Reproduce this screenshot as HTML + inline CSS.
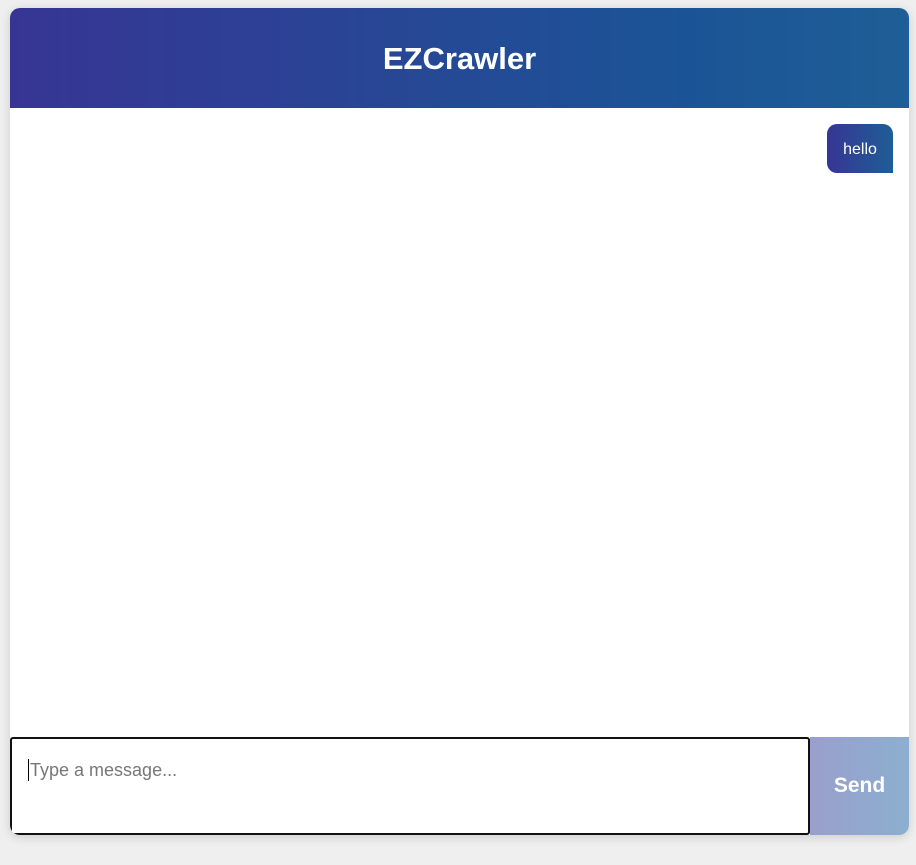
<!DOCTYPE html>
<html><head><style>
html,body{margin:0;padding:0;background:#efefef;width:916px;height:865px;overflow:hidden;font-family:"Liberation Sans",sans-serif}
.c{position:absolute;left:10px;top:8px;width:899px;height:827px;background:#fff;border-radius:10px;overflow:hidden;box-shadow:0 2px 10px rgba(0,0,0,0.15)}
.h{height:100px;background:linear-gradient(90deg,#373594,#1b5496 75%,#1e5e96);color:#fff;font-weight:bold;font-size:31px;text-align:center;line-height:102px}
.b{position:absolute;right:16px;top:116px;width:66px;height:49px;box-sizing:border-box;background:linear-gradient(90deg,#373594,#1e5e96);color:#fff;font-size:16px;line-height:51px;text-align:center;border-radius:10px 10px 0 10px}
.i{position:absolute;left:0;top:729px;width:800px;height:98px;box-sizing:border-box;border:2px solid #111;border-radius:3px;background:#fff}
.i span{position:absolute;left:18px;top:21px;color:#777;font-size:18px}
.i i{position:absolute;left:16px;top:20px;width:1px;height:22px;background:#000}
.s{position:absolute;left:800px;top:729px;width:99px;height:98px;background:linear-gradient(90deg,#9a9fcc,#8cafcf);color:#fff;font-weight:bold;font-size:21px;text-align:center;line-height:98px}
</style></head><body>
<div class="c">
<div class="h">EZCrawler</div>
<div class="b">hello</div>
<div class="i"><i></i><span>Type a message...</span></div>
<div class="s">Send</div>
</div>
</body></html>
